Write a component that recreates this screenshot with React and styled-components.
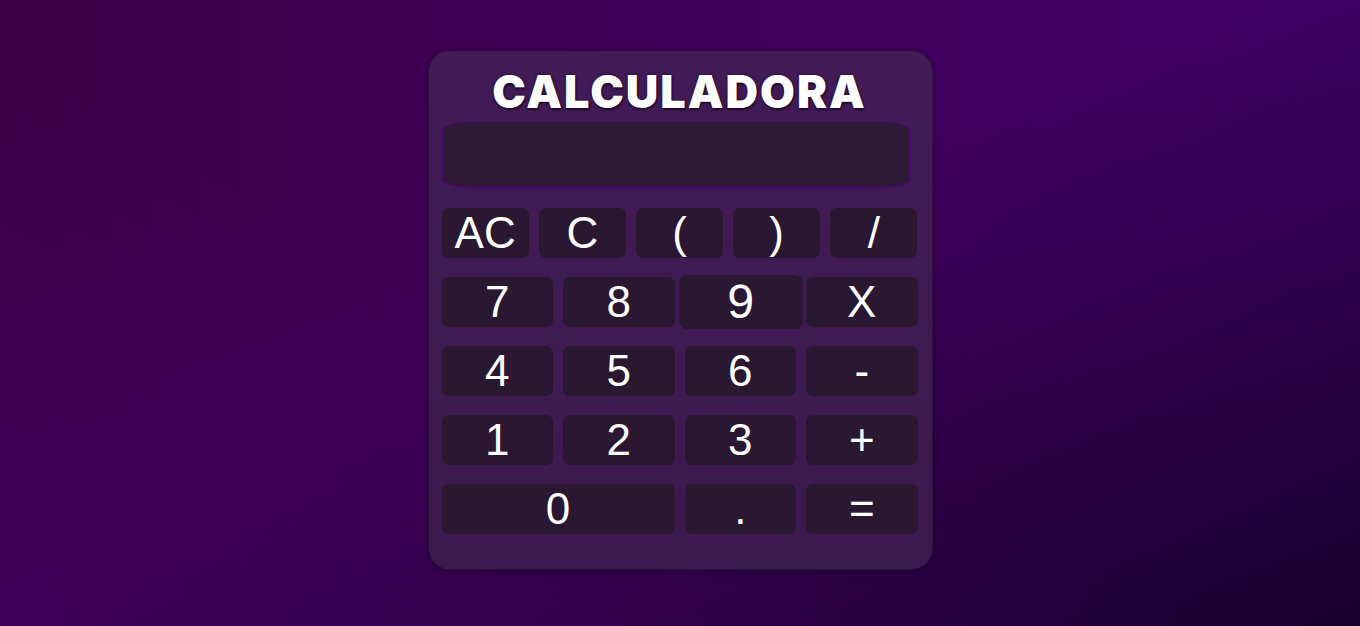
import React from 'react';
import styled, { createGlobalStyle } from 'styled-components';

const GlobalStyle = createGlobalStyle`
  html, body {
    margin: 0;
    padding: 0;
    height: 100%;
  }
  #root {
    min-height: 100vh;
  }
`;

const Page = styled.div`
  min-height: 100vh;
  box-sizing: border-box;
  padding-top: 50px;
  display: flex;
  justify-content: center;
  align-items: flex-start;
  background:
    linear-gradient(to top right, rgba(66, 0, 108, 0.45) 0%, rgba(66, 0, 108, 0) 45%),
    linear-gradient(to bottom right, rgba(18, 0, 36, 0) 45%, rgba(18, 0, 36, 0.85) 100%),
    linear-gradient(to right, #3e0049, #410068);
`;

const Card = styled.div`
  width: 505px;
  box-sizing: border-box;
  padding: 15px 14px 35px 13px;
  border-radius: 22px;
  background: linear-gradient(to bottom, #421b57, #3b1a4d);
  border: 1px solid rgba(30, 10, 40, 0.5);
  box-shadow: 0 2px 6px rgba(10, 0, 20, 0.35);
  display: flex;
  flex-direction: column;
`;

const Title = styled.h1`
  margin: 0 0 3px;
  text-align: center;
  font-family: Inter, 'Liberation Sans', sans-serif;
  font-weight: 900;
  font-size: 45px;
  letter-spacing: 2px;
  line-height: 52px;
  color: #ffffff;
  text-shadow: 0 0 3px rgba(20, 0, 30, 0.8), 1px 2px 2px rgba(20, 0, 30, 0.6);
`;

const Display = styled.div`
  height: 68px;
  box-sizing: border-box;
  margin: 0 7px 19px 0;
  background: #2c1a36;
  border: 2px solid #4c0868;
  border-top-width: 1px;
  border-radius: 40px / 9px;
`;

const Keys = styled.div`
  display: grid;
  grid-template-columns: repeat(${p => p.$cols}, 1fr);
  column-gap: 10px;
  row-gap: 19px;
  margin-bottom: ${p => p.$gap || 0}px;
`;

const Key = styled.button`
  height: 50px;
  padding: 0;
  border: none;
  border-radius: 7px;
  background: #2a1731;
  color: #ffffff;
  font-family: 'Liberation Sans', Arial, sans-serif;
  font-size: 44px;
  line-height: 50px;
  cursor: pointer;
  grid-column: span ${p => p.$span || 1};
  transform: ${p => (p.$hover ? 'scale(1.1, 1.08)' : 'none')};
`;

const topRow = ['AC', 'C', '(', ')', '/'];
const rows = [
  ['7', '8', '9', 'X'],
  ['4', '5', '6', '-'],
  ['1', '2', '3', '+'],
];

export default function App() {
  return (
    <>
      <GlobalStyle />
      <Page>
        <Card>
          <Title>CALCULADORA</Title>
          <Display />
          <Keys $cols={5} $gap={19}>
            {topRow.map(k => (
              <Key key={k}>{k}</Key>
            ))}
          </Keys>
          <Keys $cols={4}>
            {rows.flat().map(k => (
              <Key key={k} $hover={k === '9'}>
                {k}
              </Key>
            ))}
            <Key $span={2}>0</Key>
            <Key>.</Key>
            <Key>=</Key>
          </Keys>
        </Card>
      </Page>
    </>
  );
}
